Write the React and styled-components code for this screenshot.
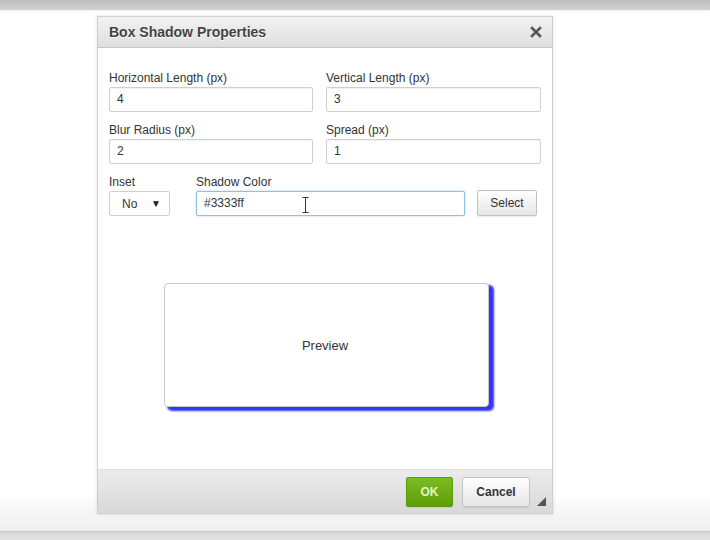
import React from 'react';
import styled, { createGlobalStyle } from 'styled-components';

const GlobalStyle = createGlobalStyle`
  html, body { margin: 0; padding: 0; }
  body {
    width: 710px;
    height: 540px;
    overflow: hidden;
    font-family: "Liberation Sans", Arial, sans-serif;
    font-size: 12px;
    color: #333;
  }
`;

const Page = styled.div`
  width: 710px;
  height: 540px;
  display: flex;
  flex-direction: column;
  background: linear-gradient(#ffffff 0%, #ffffff 91%, #ebebeb 100%);
`;

const TopBar = styled.div`
  height: 10px;
  background: linear-gradient(#bdbdbd, #d2d2d2);
  box-shadow: 0 1px 2px rgba(0, 0, 0, 0.08);
`;

const Stage = styled.div`
  flex: 1;
  display: flex;
  justify-content: flex-start;
  padding: 6px 0 0 97px;
`;

const BottomBar = styled.div`
  height: 8px;
  border-top: 1px solid #c8c8c8;
  background: linear-gradient(#d8d8d8, #e4e4e4);
`;

const Dialog = styled.div`
  width: 454px;
  height: 496px;
  display: flex;
  flex-direction: column;
  border: 1px solid #cfcfcf;
  background: #fff;
  box-shadow: 0 0 4px rgba(0, 0, 0, 0.12);
`;

const Header = styled.div`
  height: 30px;
  display: flex;
  align-items: center;
  justify-content: space-between;
  padding: 0 9px 0 11px;
  background: linear-gradient(#f2f2f2, #dedede);
  border-bottom: 1px solid #c6c6c6;
`;

const Title = styled.div`
  font-size: 14px;
  font-weight: bold;
  color: #444;
  text-shadow: 0 1px 0 #fff;
`;

const Close = styled.div`
  width: 14px;
  height: 14px;
  display: flex;
  align-items: center;
  justify-content: center;
`;

const Body = styled.div`
  flex: 1;
  padding: 22px 11px 0 11px;
  display: flex;
  flex-direction: column;
`;

const Grid = styled.div`
  display: grid;
  grid-template-columns: 204px 215px;
  column-gap: 13px;
  row-gap: 10px;
`;

const Field = styled.div`
  display: flex;
  flex-direction: column;
  margin-left: ${(p) => p.$ml || '0'};
`;

const Label = styled.div`
  height: 15px;
  line-height: 16px;
  margin-bottom: 2px;
  color: #333;
`;

const Input = styled.div`
  box-sizing: border-box;
  width: ${(p) => p.$w || '100%'};
  height: 25px;
  line-height: 23px;
  padding: 0 7px;
  border: 1px solid ${(p) => (p.$focus ? '#8fc0de' : '#cfcfcf')};
  border-radius: 2px;
  background: #fff;
  box-shadow: ${(p) =>
    p.$focus ? '0 0 2px rgba(90, 160, 210, 0.5)' : 'inset 0 1px 1px rgba(0,0,0,0.06)'};
  color: #333;
  position: relative;
`;

const Row = styled.div`
  display: flex;
  align-items: flex-end;
  margin-top: 10px;
`;

const SelectBox = styled.div`
  box-sizing: border-box;
  width: 61px;
  height: 25px;
  display: flex;
  align-items: center;
  justify-content: space-between;
  padding: 0 8px 0 12px;
  border: 1px solid #cfcfcf;
  border-radius: 2px;
  background: #fff;
`;

const Arrow = styled.span`
  font-size: 10px;
  color: #222;
`;

const Button = styled.div`
  box-sizing: border-box;
  width: ${(p) => p.$w || 'auto'};
  height: ${(p) => p.$h || '26px'};
  margin-left: ${(p) => p.$ml || '0'};
  display: flex;
  align-items: center;
  justify-content: center;
  border-radius: 2px;
  font-weight: ${(p) => (p.$bold ? 'bold' : 'normal')};
  color: ${(p) => (p.$primary ? '#e4f4c6' : '#333')};
  border: 1px solid ${(p) => (p.$primary ? '#5d9a0e' : '#c2c2c2')};
  background: ${(p) =>
    p.$primary
      ? 'linear-gradient(#7cbb22, #5f9e06)'
      : 'linear-gradient(#ffffff, #e6e6e6)'};
  box-shadow: 0 1px 1px rgba(0, 0, 0, 0.08);
`;

const PreviewWrap = styled.div`
  display: flex;
  justify-content: center;
  margin-top: 67px;
  padding-left: 2px;
`;

const Preview = styled.div`
  box-sizing: border-box;
  width: 325px;
  height: 124px;
  display: flex;
  align-items: center;
  justify-content: center;
  border: 1px solid #c8c8c8;
  border-radius: 4px;
  background: #fff;
  box-shadow: 4px 3px 2px 1px #3333ff;
  color: #333;
  font-size: 13px;
  padding-right: 2px;
`;

const Footer = styled.div`
  position: relative;
  height: 44px;
  box-sizing: border-box;
  display: flex;
  justify-content: flex-end;
  align-items: flex-start;
  gap: 9px;
  padding: 7px 22px 0 0;
  background: linear-gradient(#ebebeb, #d9d9d9);
  border-top: 1px solid #dedede;
`;

const Grip = styled.svg`
  position: absolute;
  right: 6px;
  bottom: 7px;
`;

const Cursor = styled.svg`
  position: absolute;
  left: 105px;
  top: 5px;
`;

function App() {
  return (
    <>
      <GlobalStyle />
      <Page>
        <TopBar />
        <Stage>
          <Dialog>
            <Header>
              <Title>Box Shadow Properties</Title>
              <Close>
                <svg width="12" height="12" viewBox="0 0 12 12">
                  <path d="M2 2 L10 10 M10 2 L2 10" stroke="#555" strokeWidth="2.6" strokeLinecap="square" />
                </svg>
              </Close>
            </Header>
            <Body>
              <Grid>
                <Field>
                  <Label>Horizontal Length (px)</Label>
                  <Input>4</Input>
                </Field>
                <Field>
                  <Label>Vertical Length (px)</Label>
                  <Input>3</Input>
                </Field>
                <Field>
                  <Label>Blur Radius (px)</Label>
                  <Input>2</Input>
                </Field>
                <Field>
                  <Label>Spread (px)</Label>
                  <Input>1</Input>
                </Field>
              </Grid>
              <Row>
                <Field>
                  <Label>Inset</Label>
                  <SelectBox>
                    <span>No</span>
                    <Arrow>▼</Arrow>
                  </SelectBox>
                </Field>
                <Field $ml="26px">
                  <Label>Shadow Color</Label>
                  <Input $w="269px" $focus>
                    #3333ff
                    <Cursor width="7" height="16" viewBox="0 0 7 16">
                      <path d="M0.5 0.5 H6.5 M3.5 0.5 V15.5 M0.5 15.5 H6.5" stroke="#333" strokeWidth="1" fill="none" />
                    </Cursor>
                  </Input>
                </Field>
                <Button $w="60px" $ml="12px">Select</Button>
              </Row>
              <PreviewWrap>
                <Preview>Preview</Preview>
              </PreviewWrap>
            </Body>
            <Footer>
              <Button $primary $bold $h="30px" $w="47px">OK</Button>
              <Button $bold $h="30px" $w="68px">Cancel</Button>
              <Grip width="9" height="9" viewBox="0 0 9 9">
                <path d="M9 0 L9 9 L0 9 Z" fill="#555" />
              </Grip>
            </Footer>
          </Dialog>
        </Stage>
        <BottomBar />
      </Page>
    </>
  );
}

export default App;
